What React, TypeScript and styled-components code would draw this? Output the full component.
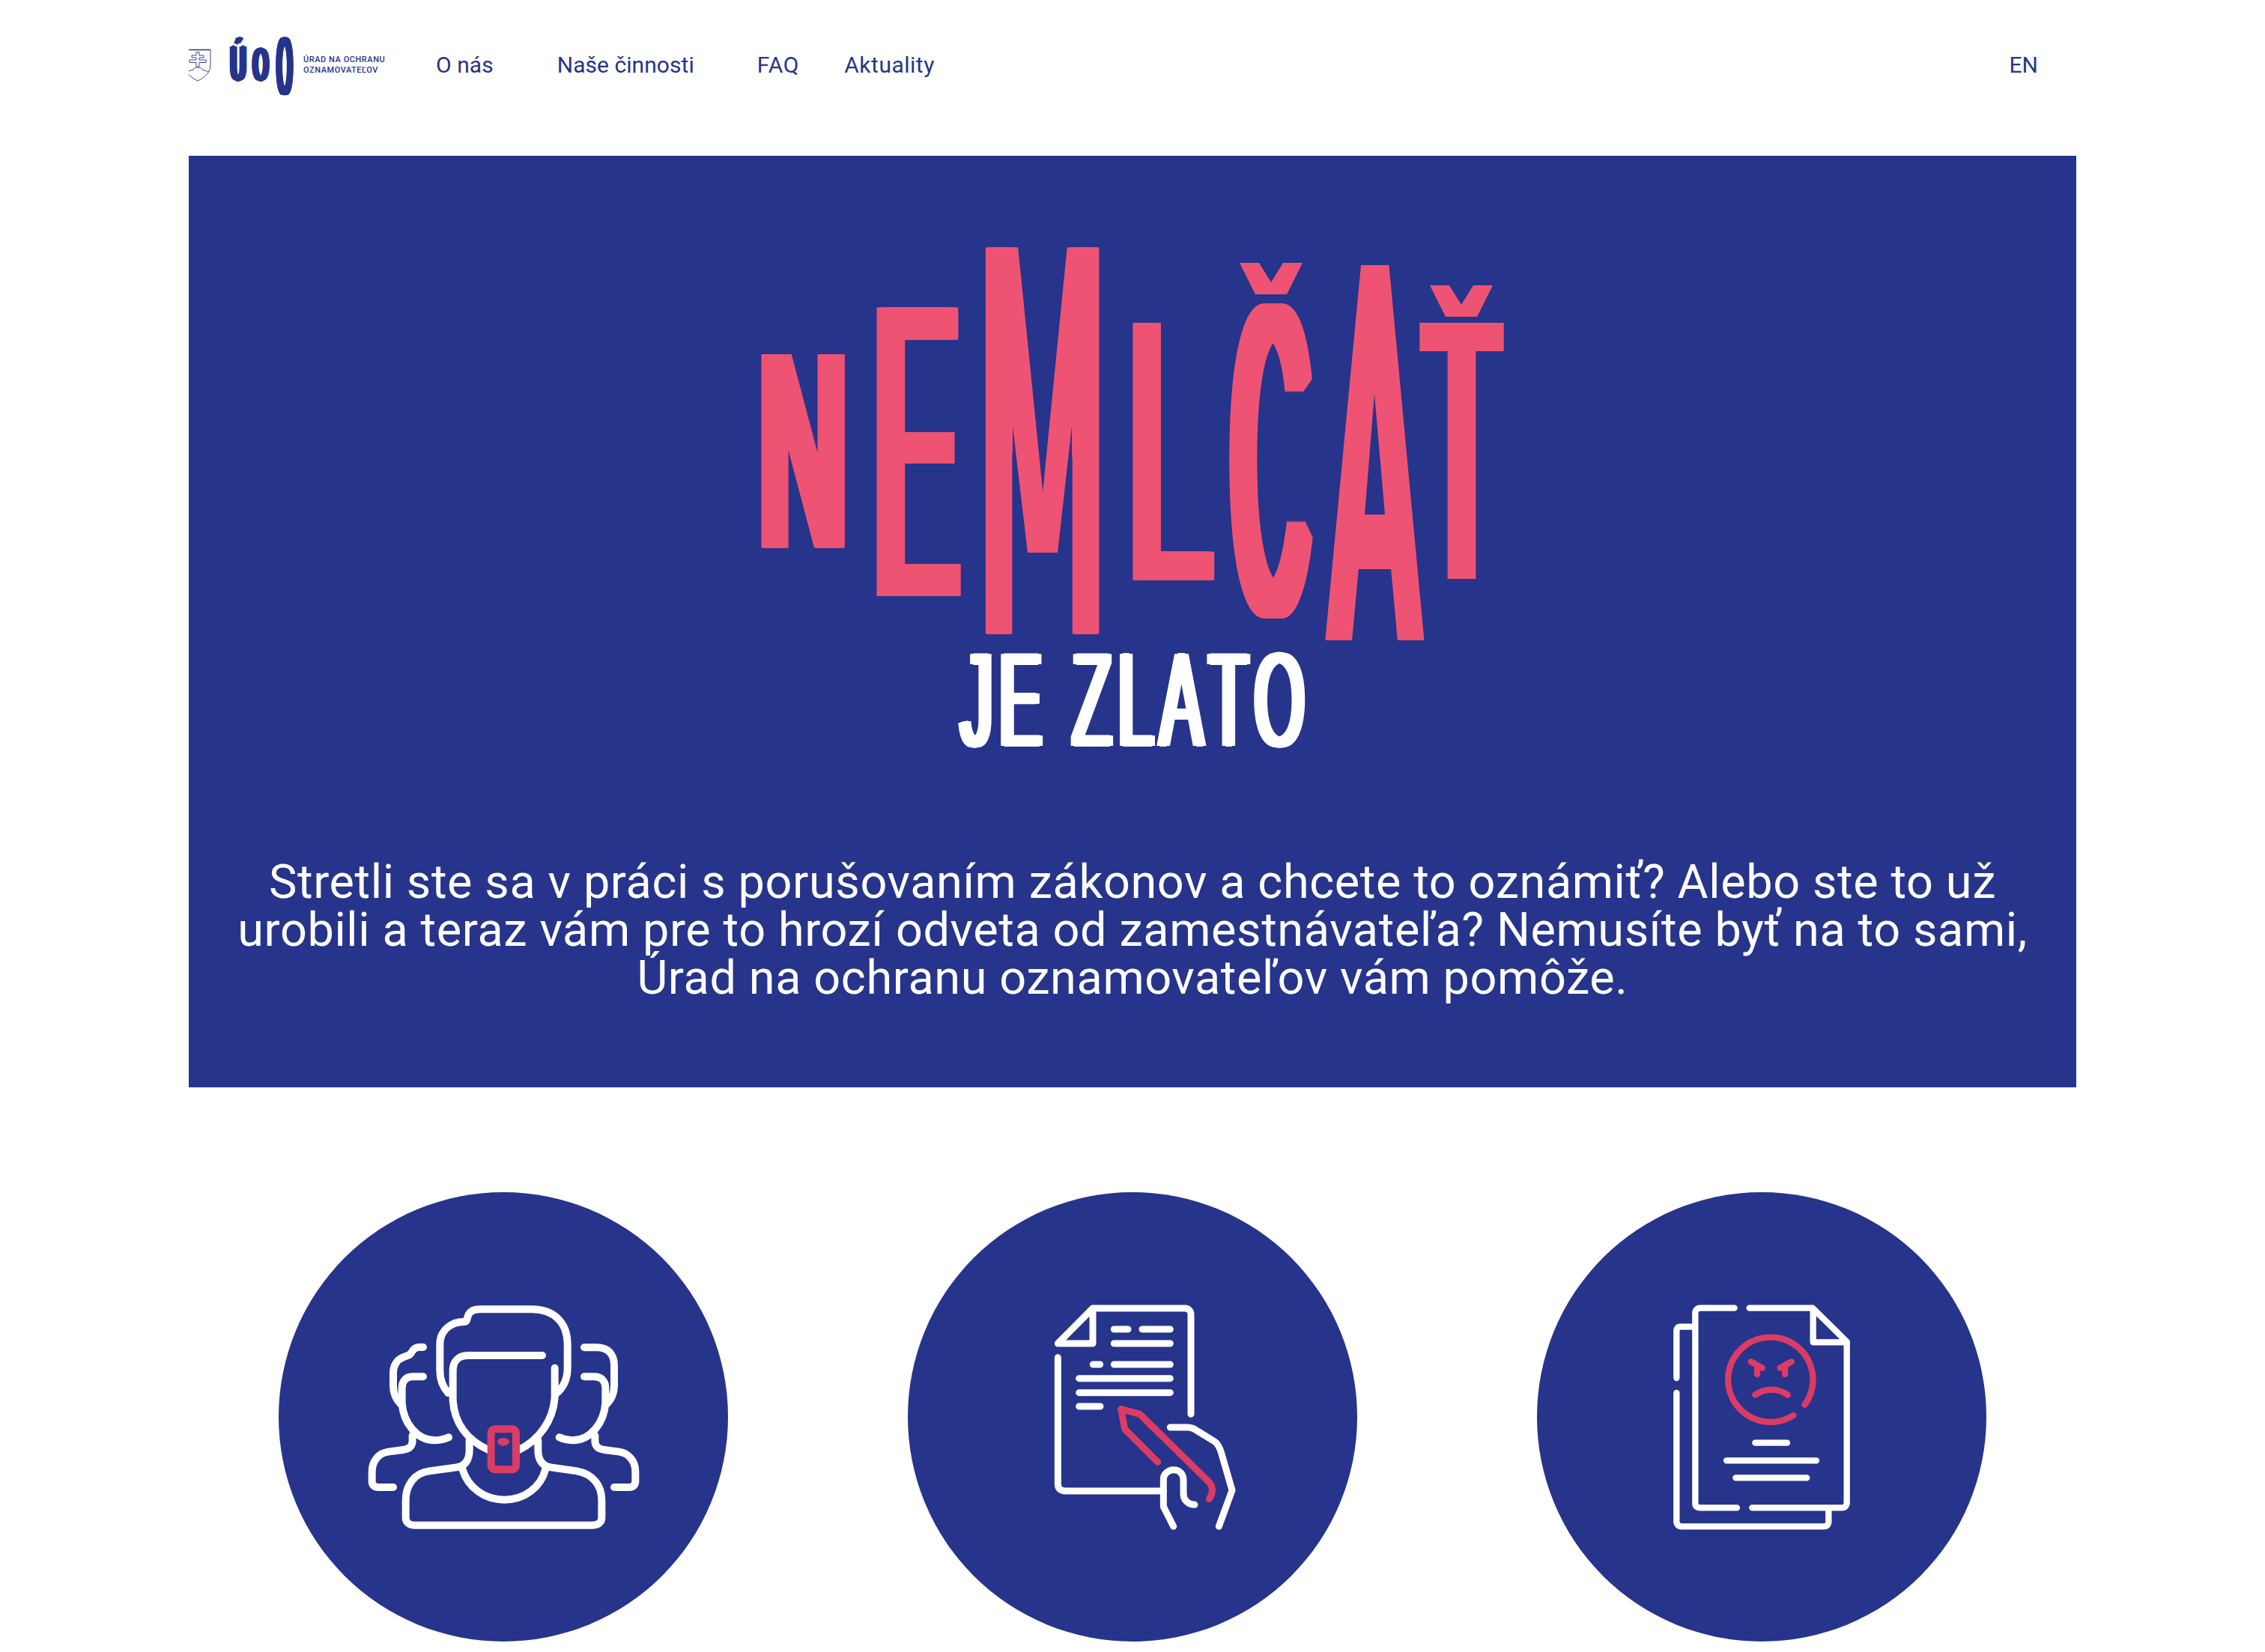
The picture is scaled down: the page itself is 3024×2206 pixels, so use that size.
import React from 'react';
import styled, { createGlobalStyle } from 'styled-components';

const NAVY = '#27348b';
const PINK = '#ee5373';
const RED = '#dc3c64';

const GlobalStyle = createGlobalStyle`
  html, body {
    margin: 0;
    padding: 0;
    background: #fff;
    font-family: Roboto, "Noto Sans", sans-serif;
    color: ${NAVY};
  }
`;

const Page = styled.div`
  width: 2520px;
  margin: 0 auto;
  height: 2206px;
  overflow: hidden;
`;

const Header = styled.header`
  display: flex;
  align-items: center;
  height: 174px;
  margin: 0 0 34px -6px;
  padding-right: 51px;
`;

const Brand = styled.div`
  display: flex;
  align-items: center;
  width: 336px;
`;

const Mark = styled.div`
  display: flex;
  align-items: flex-start;
  height: 82px;
  margin: 0 13px 0 26px;
`;

const MarkSlot = styled.span<{ $w: number; $h: number; $top: number; $gap: number }>`
  display: flex;
  align-items: center;
  justify-content: center;
  width: ${p => p.$w}px;
  height: ${p => p.$h}px;
  margin-top: ${p => p.$top}px;
  margin-left: ${p => p.$gap}px;
`;

const BrandText = styled.div`
  font-size: 11px;
  font-weight: 500;
  line-height: 14px;
  letter-spacing: 0.55px;
  white-space: nowrap;
`;

const NavLink = styled.a<{ $after?: number; $track?: number }>`
  font-size: 30px;
  line-height: 40px;
  letter-spacing: ${p => p.$track ?? 0.05}px;
  white-space: nowrap;
  margin-right: ${p => p.$after ?? 0}px;
`;

const Lang = styled(NavLink)`
  margin-left: auto;
`;

const Hero = styled.section`
  display: flex;
  flex-direction: column;
  align-items: center;
  height: 1244px;
  padding-top: 121px;
  box-sizing: border-box;
  background: ${NAVY};
`;

const WordMark = styled.div`
  display: flex;
  align-items: flex-start;
  height: 524px;
`;

const Slot = styled.div<{ $w: number; $h: number; $top: number; $gap: number }>`
  position: relative;
  flex: none;
  width: ${p => p.$w}px;
  height: ${p => p.$h}px;
  margin-top: ${p => p.$top}px;
  margin-left: ${p => p.$gap}px;
`;

const ClipBox = styled.div`
  display: flex;
  align-items: center;
  justify-content: center;
  width: 100%;
  height: 100%;
  clip-path: inset(0 -60px -8px -60px);
`;

// horizontal text-shadows fatten the upright strokes only, which is what the condensed lettering needs
const thicken = (amount: number, color: string) => {
  const out: string[] = [];
  for (let x = -amount; x < amount; x += 1) out.push(`${x}px 0 0 ${color}`);
  out.push(`${amount}px 0 0 ${color}`);
  return out.join(', ');
};

const Glyph = styled.span<{ $sx: number; $sy: number; $dx?: number; $dy?: number; $color: string; $stroke?: number; $thick?: number; $track?: number }>`
  flex: none;
  display: block;
  font-family: "Liberation Sans", sans-serif;
  font-size: 100px;
  line-height: 100px;
  font-kerning: none;
  white-space: nowrap;
  letter-spacing: ${p => p.$track ?? 0}px;
  color: ${p => p.$color};
  -webkit-text-stroke: ${p => p.$stroke ?? 0}px ${p => p.$color};
  text-shadow: ${p => (p.$thick ? thicken(p.$thick, p.$color) : 'none')};
  transform: translate(${p => p.$dx ?? 0}px, ${p => p.$dy ?? 0}px) scale(${p => p.$sx}, ${p => p.$sy});
`;

const CaronShape = styled.svg`
  position: absolute;
  top: -50px;
  left: 14px;
  width: 84px;
  height: 42px;
  fill: ${PINK};
`;

// the custom lettering has a shorter M vertex and a lower A bar than any installed font
const LetterPatch = styled.svg`
  position: absolute;
  top: 0;
  left: 0;
  width: 100%;
  height: 100%;
  overflow: visible;
  .bg {
    fill: ${NAVY};
  }
  .fg {
    fill: ${PINK};
  }
`;

const Tagline = styled.div`
  display: flex;
  align-items: center;
  justify-content: center;
  width: 466px;
  height: 127px;
  margin-top: 18px;
`;

const Lead = styled.p`
  margin: 148px 0 0;
  font-size: 63px;
  line-height: 64px;
  letter-spacing: 0.6px;
  color: #fff;
  text-align: center;
  white-space: nowrap;
`;

const Circles = styled.div`
  display: grid;
  grid-template-columns: repeat(3, 1fr);
  margin-top: 140px;
`;

const Cell = styled.div`
  display: flex;
  justify-content: center;
`;

const Circle = styled.div`
  display: flex;
  align-items: center;
  justify-content: center;
  width: 600px;
  height: 600px;
  border-radius: 50%;
  background: ${NAVY};
`;

const IconSvg = styled.svg`
  display: block;
  fill: none;
  stroke: #fff;
  stroke-linecap: round;
  stroke-linejoin: round;
  .red {
    stroke: ${RED};
  }
`;

const letters = [
  { ch: 'N', w: 113, h: 259, top: 144, gap: 0, sx: 1.58, sy: 3.76, thick: 7.3, dx: 0 },
  { ch: 'E', w: 112, h: 385, top: 81, gap: 41, sx: 1.66, sy: 5.6, thick: 6.7, dx: -3 },
  { ch: 'M', w: 156, h: 516, top: 0, gap: 32, sx: 1.98, sy: 7.5, thick: 4.8, dx: 0 },
  { ch: 'L', w: 113, h: 343, top: 102, gap: 39, sx: 2.05, sy: 4.99, thick: 4.5, dx: -4 },
  { ch: 'Č', w: 111, h: 428, top: 72, gap: 19, sx: 1.38, sy: 5.94, thick: 8.7, dx: 0, caron: true },
  { ch: 'A', w: 133, h: 501, top: 23, gap: 17, sx: 1.7, sy: 7.28, thick: 5.7, dx: 0 },
  { ch: 'Ť', w: 113, h: 342, top: 102, gap: -7, sx: 1.58, sy: 4.97, thick: 7.3, dx: 0, caron: true },
];

const patches: Record<string, React.ReactNode> = {
  M: <polygon className="bg" points="38,530 38,240 58,409 98,409 117,240 117,530" />,
  A: (
    <>
      <polygon className="fg" points="52,120 81,120 97,408 36,408" />
      <polygon className="bg" points="66,174 80,335 53,335" />
      <polygon className="bg" points="46,408 87,408 94,515 39,515" />
    </>
  ),
};

const Shield = () => (
  <svg width="36" height="44" viewBox="0 0 36 44" fill="none" stroke={NAVY} strokeWidth="0.9">
    <path d="M1 1.500H35V22C35 32 27 38.500 18 43C9 38.500 1 32 1 22Z" />
    <path d="M1 1.500H35" strokeWidth="1.6" />
    <path d="M16 4.500H20V9H26V12H20V15H29V18.500H20V24H16V18.500H7V15H16V12H10V9H16Z" />
    <path d="M3 31C6 31 8 28 11 29C12 26 15 25 18 25C21 25 24 26 25 29C28 28 30 31 33 31" />
  </svg>
);

const PeopleIcon = () => (
  <IconSvg width="440" height="360" viewBox="-24 -24 1320 1080" strokeWidth="30">
    <path d="M415 420C392 395 382 365 382 330V225C382 170 425 135 480 135C492 135 490 120 497 105C505 90 520 85 545 85H750C840 85 893 140 893 225V320C893 370 870 405 845 425" />
    <path d="M792 270H495C455 270 434 295 434 330V450C440 540 490 610 580 650" />
    <path d="M842 320V440C835 530 780 610 695 650" />
    <path d="M500 610V650C500 690 480 715 450 718L340 733C280 740 245 790 245 850V920C245 940 260 950 280 950H990C1015 950 1030 940 1030 920V850C1030 790 995 745 930 733L825 718C795 715 775 690 775 650V610" />
    <path d="M472 725C495 800 560 848 640 848C720 848 785 800 805 725" />
    <path d="M315 237H300C285 237 275 245 268 258C262 272 250 270 235 277C210 287 195 310 195 340V390C195 425 205 445 225 465" />
    <path d="M315 355H270C245 355 230 375 230 400V460C235 540 290 610 360 610C385 610 400 605 417 598" />
    <path d="M272 590V610C272 635 258 645 235 648L175 656C135 662 110 695 110 735V775C110 790 120 798 135 798H195" />
    <path d="M960 238H1010C1055 238 1080 265 1080 310V390C1080 425 1070 445 1050 465" />
    <path d="M960 355H1000C1030 355 1045 375 1045 400V460C1040 540 985 610 915 610C890 610 875 605 860 598" />
    <path d="M1003 590V610C1003 635 1017 645 1040 648L1100 656C1140 662 1165 695 1165 735V775C1165 790 1155 798 1140 798H1080" />
    <rect className="red" x="587" y="565" width="100" height="162" rx="16" />
    <ellipse cx="636" cy="616" rx="24" ry="16" fill={RED} stroke="none" />
  </IconSvg>
);

const WritingIcon = () => (
  <IconSvg width="300" height="350" viewBox="-54 -9 900 1050" strokeWidth="27">
    <path d="M97 278V785C97 805 110 813 130 813H520" />
    <path d="M630 505V105C630 90 618 81 605 81H237L97 222H237V81" />
    <path d="M322 165H378M435 165H547M322 222H547M238 306H266M322 306H547M182 362H547M182 419H547M182 474H267" />
    <path d="M547 558H615C635 558 645 565 660 575L725 615C740 625 745 640 750 655L795 810L742 955" />
    <path d="M560 955L520 875V765C520 745 540 728 560 728C585 728 600 745 600 770V825C600 850 620 868 645 868" />
    <path className="red" d="M497 697L365 565L350 485L425 505L700 775C720 795 720 820 703 845" />
  </IconSvg>
);

const AngryDocIcon = () => (
  <IconSvg width="290" height="350" viewBox="-9 -9 870 1050" strokeWidth="25">
    <path d="M317 80H180C168 80 160 88 160 100V865C160 875 168 880 180 880H327" />
    <path d="M377 80H630L767 215V860C767 872 760 880 748 880H388" />
    <path d="M632 85V217H767" />
    <path d="M150 155H100C90 155 85 162 85 172V360" />
    <path d="M85 420V935C85 948 92 955 105 955H675C688 955 694 948 694 935V885" />
    <path d="M400 620H528M285 691H645M322 760H607" />
    <path className="red" d="M598 468A170 170 0 1 0 553 510" />
    <path className="red" d="M383 295L428 320M408 320V345M545 295L500 320M519 320V345" />
    <path className="red" d="M400 428C440 400 490 400 530 428" />
  </IconSvg>
);

const App: React.FC = () => {
  return (
    <>
      <GlobalStyle />
      <Page>
        <Header>
          <Brand>
            <Shield />
            <Mark>
              <MarkSlot $w={21} $h={47} $top={15} $gap={0}>
                <Glyph $sx={0.27} $sy={0.64} $color={NAVY} $stroke={5} $thick={13}>Ú</Glyph>
              </MarkSlot>
              <MarkSlot $w={23} $h={47} $top={15} $gap={7}>
                <Glyph $sx={0.25} $sy={0.62} $color={NAVY} $stroke={5} $thick={13}>O</Glyph>
              </MarkSlot>
              <MarkSlot $w={24} $h={82} $top={0} $gap={9}>
                <Glyph $sx={0.25} $sy={1.1} $color={NAVY} $stroke={1} $thick={13}>O</Glyph>
              </MarkSlot>
            </Mark>
            <BrandText>
              ÚRAD NA OCHRANU
              <br />
              OZNAMOVATEĽOV
            </BrandText>
          </Brand>
          <NavLink $after={85}>O nás</NavLink>
          <NavLink $after={84}>Naše činnosti</NavLink>
          <NavLink $after={60} $track={0.8}>FAQ</NavLink>
          <NavLink $track={0.5}>Aktuality</NavLink>
          <Lang>EN</Lang>
        </Header>

        <Hero>
          <WordMark>
            {letters.map(l => (
              <Slot key={l.ch} $w={l.w} $h={l.h} $top={l.top} $gap={l.gap}>
                {l.caron && (
                  <CaronShape viewBox="0 0 84 42" aria-hidden="true">
                    <polygon points="0,0 26,0 42,26 58,0 84,0 63,42 21,42" />
                  </CaronShape>
                )}
                <ClipBox>
                  <Glyph $sx={l.sx} $sy={l.sy} $dx={l.dx} $dy={-3} $thick={l.thick} $color={PINK}>{l.ch}</Glyph>
                </ClipBox>
                {patches[l.ch] && (
                  <LetterPatch viewBox={`0 0 ${l.w} ${l.h}`} aria-hidden="true">
                    {patches[l.ch]}
                  </LetterPatch>
                )}
              </Slot>
            ))}
          </WordMark>
          <Tagline>
            <Glyph $sx={0.855} $sy={1.78} $dx={4} $dy={-1} $thick={5.5} $stroke={1} $track={10} $color="#fff">JE ZLATO</Glyph>
          </Tagline>
          <Lead>
            Stretli ste sa v práci s porušovaním zákonov a chcete to oznámiť? Alebo ste to už
            <br />
            urobili a teraz vám pre to hrozí odveta od zamestnávateľa? Nemusíte byť na to sami,
            <br />
            Úrad na ochranu oznamovateľov vám pomôže.
          </Lead>
        </Hero>

        <Circles>
          <Cell><Circle><PeopleIcon /></Circle></Cell>
          <Cell><Circle><WritingIcon /></Circle></Cell>
          <Cell><Circle><AngryDocIcon /></Circle></Cell>
        </Circles>
      </Page>
    </>
  );
};

export default App;
